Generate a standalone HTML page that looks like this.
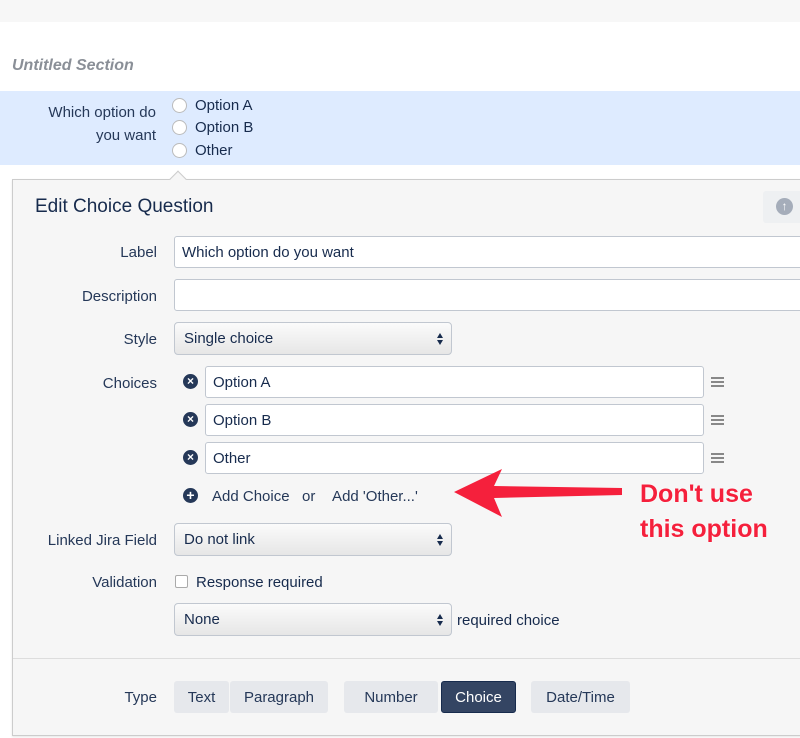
<!DOCTYPE html>
<html><head><style>
*{margin:0;padding:0;box-sizing:border-box}
body{width:800px;height:738px;background:#fff;font-family:"Liberation Sans",sans-serif;position:relative;overflow:hidden;color:#172b4d;font-size:15px}
.a{position:absolute}
.lbl{position:absolute;right:643px;text-align:right;color:#253858;font-size:15px}
.inp{position:absolute;background:#fff;border:1px solid #c1c7d0;border-radius:3px;font-size:15px;padding-left:7px;display:flex;align-items:center;color:#172b4d}
.sel{position:absolute;border:1px solid #c1c7d0;border-radius:4px;background:linear-gradient(#fbfbfb,#e6e6e6);font-size:15px;padding-left:9px;display:flex;align-items:center}
.sel:after{content:"";position:absolute;right:8px;top:50%;margin-top:-6px;width:0;height:0;border-left:3.5px solid transparent;border-right:3.5px solid transparent;border-bottom:5px solid #172b4d}
.sel:before{content:"";position:absolute;right:8px;top:50%;margin-top:1px;width:0;height:0;border-left:3.5px solid transparent;border-right:3.5px solid transparent;border-top:5px solid #172b4d}
.x{position:absolute;width:15px;height:15px;border-radius:50%;background:#253858;color:#fff;font-size:12px;font-weight:bold;text-align:center;line-height:15px}
.hb{position:absolute;width:13px;height:2px;background:#888;box-shadow:0 4px 0 #888,0 8px 0 #888}
.rad{position:absolute;left:172px;width:15px;height:15px;border:1px solid #bbb;border-radius:50%;background:#fff}
.btn{position:absolute;top:681px;height:32px;background:#e6e8ec;border-radius:3px;display:flex;align-items:center;justify-content:center;font-size:15px;color:#253858}
</style></head><body>
<div class="a" style="left:0;top:0;width:800px;height:22px;background:#f7f7f7"></div>
<div class="a" style="left:12px;top:57px;font-style:italic;font-weight:bold;color:#8a8f97;font-size:16px">Untitled Section</div>
<div class="a" style="left:0;top:91px;width:800px;height:74px;background:#deebff"></div>
<div class="a" style="left:20px;top:101px;width:136px;text-align:right;line-height:23px;color:#253858">Which option do<br>you want</div>
<div class="rad" style="top:98px"></div><div class="a" style="left:195px;top:97px">Option A</div>
<div class="rad" style="top:120px"></div><div class="a" style="left:195px;top:119px">Option B</div>
<div class="rad" style="top:143px"></div><div class="a" style="left:195px;top:142px">Other</div>
<div class="a" style="left:12px;top:179px;width:800px;height:557px;background:#f6f6f6;border:1px solid #ccc;box-shadow:0 1px 2px rgba(0,0,0,.1)"></div>
<div class="a" style="left:172px;top:173px;width:12px;height:12px;background:#f6f6f6;border-left:1px solid #ccc;border-top:1px solid #ccc;transform:rotate(45deg)"></div>
<div class="a" style="left:35px;top:196px;font-size:19px;color:#172b4d">Edit Choice Question</div>
<div class="a" style="left:763px;top:191px;width:40px;height:32px;background:#eef0f2;border-radius:3px"></div>
<div class="a" style="left:776px;top:198px;width:17px;height:17px;border-radius:50%;background:#a5adba;color:#fff;font-size:12px;text-align:center;line-height:17px;font-weight:bold">↑</div>
<div class="a" style="left:13px;top:658px;width:787px;height:1px;background:#ddd"></div>

<div class="lbl" style="top:244px">Label</div>
<div class="inp" style="left:174px;top:236px;width:640px;height:32px">Which option do you want</div>
<div class="lbl" style="top:288px">Description</div>
<div class="inp" style="left:174px;top:279px;width:640px;height:32px"></div>
<div class="lbl" style="top:331px">Style</div>
<div class="sel" style="left:174px;top:322px;width:278px;height:33px">Single choice</div>
<div class="lbl" style="top:375px">Choices</div>
<div class="x" style="left:183px;top:374px">×</div><div class="inp" style="left:205px;top:366px;width:499px;height:32px">Option A</div><div class="hb" style="left:711px;top:377px"></div>
<div class="x" style="left:183px;top:412px">×</div><div class="inp" style="left:205px;top:404px;width:499px;height:32px">Option B</div><div class="hb" style="left:711px;top:415px"></div>
<div class="x" style="left:183px;top:450px">×</div><div class="inp" style="left:205px;top:442px;width:499px;height:32px">Other</div><div class="hb" style="left:711px;top:453px"></div>
<div class="x" style="left:183px;top:488px;font-size:14px">+</div>
<div class="a" style="left:212px;top:488px;color:#253858">Add Choice&nbsp;&nbsp;&nbsp;or&nbsp;&nbsp;&nbsp;&nbsp;Add 'Other...'</div>
<svg class="a" style="left:450px;top:465px" width="180" height="55"><polygon points="4,27 52,4 44,21 172,23 172,30 44,33 52,52" fill="#f5203c"/></svg>
<div class="a" style="left:640px;top:477px;color:#f5203c;font-weight:bold;font-size:25px;line-height:35px;text-shadow:0 0 2px #fff">Don't use<br>this option</div>
<div class="lbl" style="top:532px">Linked Jira Field</div>
<div class="sel" style="left:174px;top:523px;width:278px;height:33px">Do not link</div>
<div class="lbl" style="top:574px">Validation</div>
<div class="a" style="left:175px;top:575px;width:13px;height:13px;border:1px solid #aaa;border-radius:2px;background:#fff"></div>
<div class="a" style="left:196px;top:574px">Response required</div>
<div class="sel" style="left:174px;top:603px;width:278px;height:33px">None</div>
<div class="a" style="left:457px;top:612px">required choice</div>
<div class="lbl" style="top:689px">Type</div>
<div class="btn" style="left:174px;width:55px">Text</div>
<div class="btn" style="left:230px;width:98px">Paragraph</div>
<div class="btn" style="left:344px;width:94px">Number</div>
<div class="btn" style="left:441px;width:75px;background:#344563;color:#fff;border:1px solid #172b4d">Choice</div>
<div class="btn" style="left:531px;width:99px">Date/Time</div>
</body></html>
